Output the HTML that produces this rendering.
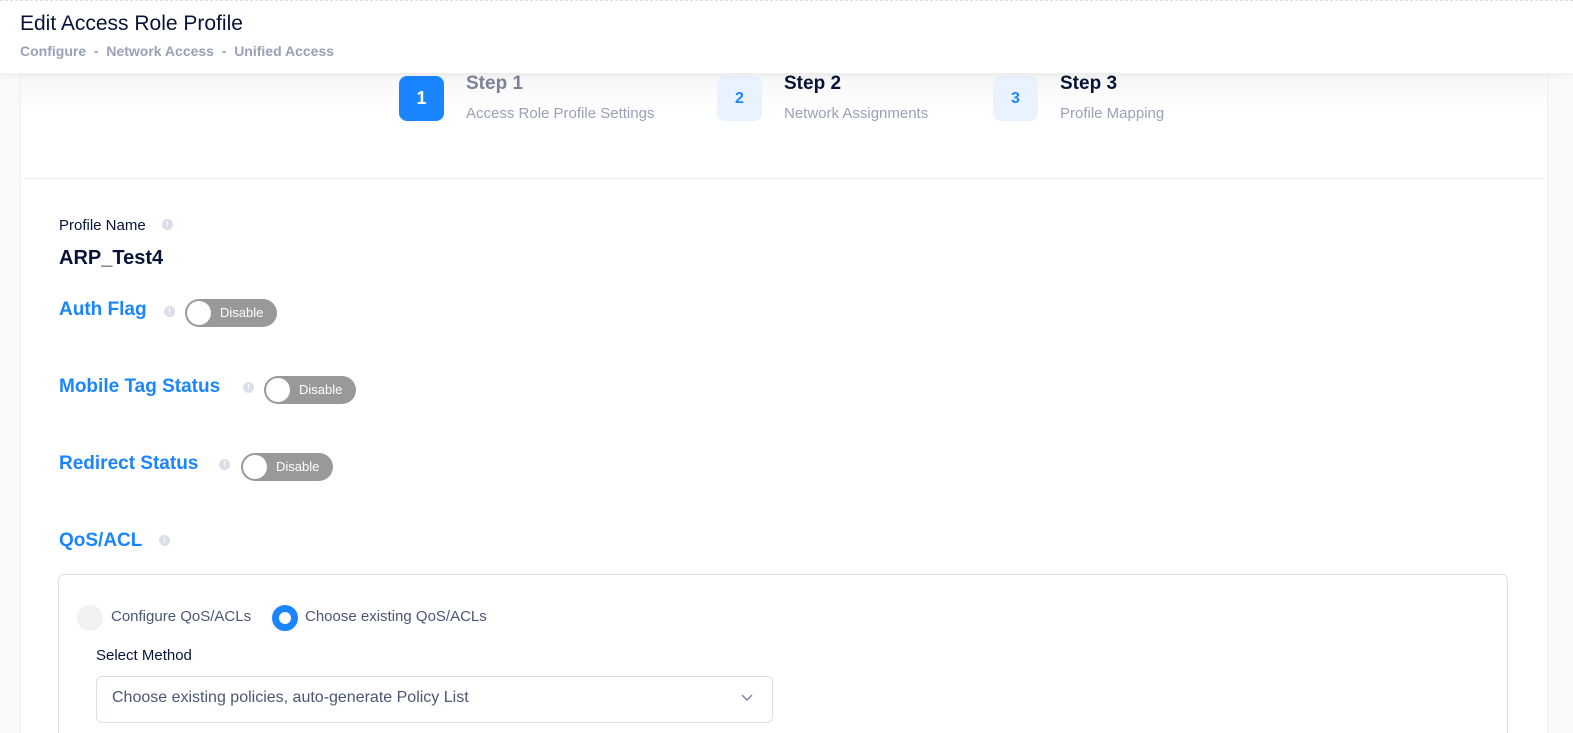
<!DOCTYPE html>
<html style="overflow:hidden;height:733px"><head><style>
body{margin:0;width:1573px;height:733px;overflow:hidden;background:#f9f9fa;font-family:"Liberation Sans",sans-serif;position:relative}
.a{position:absolute}
.hdr{left:0;top:0;width:1573px;height:72px;background:#fff;box-shadow:0 2px 8px rgba(0,0,0,.06);border-top:1px dashed #ddd;z-index:2}
.card{left:20px;top:72px;width:1526px;height:661px;background:#fff;border:1px solid #eceef1;border-bottom:none}
.top{left:21px;top:72px;width:1525px;height:106px;background:linear-gradient(#f6f6f7,#fff 40px);border-bottom:1px solid #eceef1}
.num{width:45px;height:45px;border-radius:8px;font-size:18px;font-weight:bold;display:flex;align-items:center;justify-content:center}
.st{font-size:19px;font-weight:bold}
.sd{font-size:15px;color:#99a1b7}
.bl{color:#1b84ff;font-size:19px;font-weight:bold}
.info{width:11px;height:11px;border-radius:50%;background:#dbdfe9;color:#fff;font-size:8px;text-align:center;line-height:11px;font-weight:bold}
.tg{width:92px;height:28px;border-radius:14px;background:#999;color:#fff;font-size:13px}
.tg i{position:absolute;left:2px;top:2px;width:24px;height:24px;border-radius:50%;background:#fff}
.tg span{position:absolute;left:35px;top:6px}
</style></head><body>
<div class="a hdr">
<div class="a" style="left:20px;top:11px;font-size:21px;color:#071437">Edit Access Role Profile</div>
<div class="a" style="left:20px;top:42px;font-size:14px;color:#99a1b7;font-weight:bold">Configure &nbsp;-&nbsp; Network Access &nbsp;-&nbsp; Unified Access</div>
</div>
<div class="a card"></div>
<div class="a top"></div>
<div class="a num" style="left:399px;top:76px;background:#1b84ff;color:#fff">1</div>
<div class="a st" style="left:466px;top:73px;color:#7e8299">Step 1</div>
<div class="a sd" style="left:466px;top:105px">Access Role Profile Settings</div>
<div class="a num" style="left:717px;top:76px;background:#e9f3ff;color:#1b84ff;font-size:16px">2</div>
<div class="a st" style="left:784px;top:73px;color:#071437">Step 2</div>
<div class="a sd" style="left:784px;top:105px">Network Assignments</div>
<div class="a num" style="left:993px;top:76px;background:#e9f3ff;color:#1b84ff;font-size:16px">3</div>
<div class="a st" style="left:1060px;top:73px;color:#071437">Step 3</div>
<div class="a sd" style="left:1060px;top:105px">Profile Mapping</div>

<div class="a" style="left:59px;top:217px;font-size:15px;color:#071437">Profile Name</div>
<div class="a info" style="left:162px;top:219px">!</div>
<div class="a" style="left:59px;top:247px;font-size:20px;font-weight:bold;color:#071437">ARP_Test4</div>

<div class="a bl" style="left:59px;top:299px">Auth Flag</div>
<div class="a info" style="left:164px;top:306px">!</div>
<div class="a tg" style="left:185px;top:299px"><i></i><span>Disable</span></div>

<div class="a bl" style="left:59px;top:376px">Mobile Tag Status</div>
<div class="a info" style="left:243px;top:382px">!</div>
<div class="a tg" style="left:264px;top:376px"><i></i><span>Disable</span></div>

<div class="a bl" style="left:59px;top:453px">Redirect Status</div>
<div class="a info" style="left:219px;top:459px">!</div>
<div class="a tg" style="left:241px;top:453px"><i></i><span>Disable</span></div>

<div class="a bl" style="left:59px;top:530px">QoS/ACL</div>
<div class="a info" style="left:159px;top:535px">!</div>

<div class="a" style="left:58px;top:574px;width:1448px;height:170px;border:1px solid #dbdfe9;border-radius:6px;background:#fff"></div>
<div class="a" style="left:77px;top:605px;width:26px;height:26px;border-radius:50%;background:#f1f1f4"></div>
<div class="a" style="left:111px;top:608px;font-size:15px;color:#4b5675">Configure QoS/ACLs</div>
<div class="a" style="left:272px;top:605px;width:12px;height:12px;border-radius:50%;border:7px solid #1b84ff;background:#fff"></div>
<div class="a" style="left:305px;top:608px;font-size:15px;color:#4b5675">Choose existing QoS/ACLs</div>
<div class="a" style="left:96px;top:647px;font-size:15px;color:#071437">Select Method</div>
<div class="a" style="left:96px;top:676px;width:675px;height:45px;border:1px solid #dbdfe9;border-radius:6px"></div>
<div class="a" style="left:112px;top:689px;font-size:16px;color:#4b5675">Choose existing policies, auto-generate Policy List</div>
<svg class="a" style="left:740px;top:693px" width="14" height="10"><path d="M2 2l5 5 5-5" stroke="#78829d" stroke-width="1.4" fill="none"/></svg>
</body></html>
